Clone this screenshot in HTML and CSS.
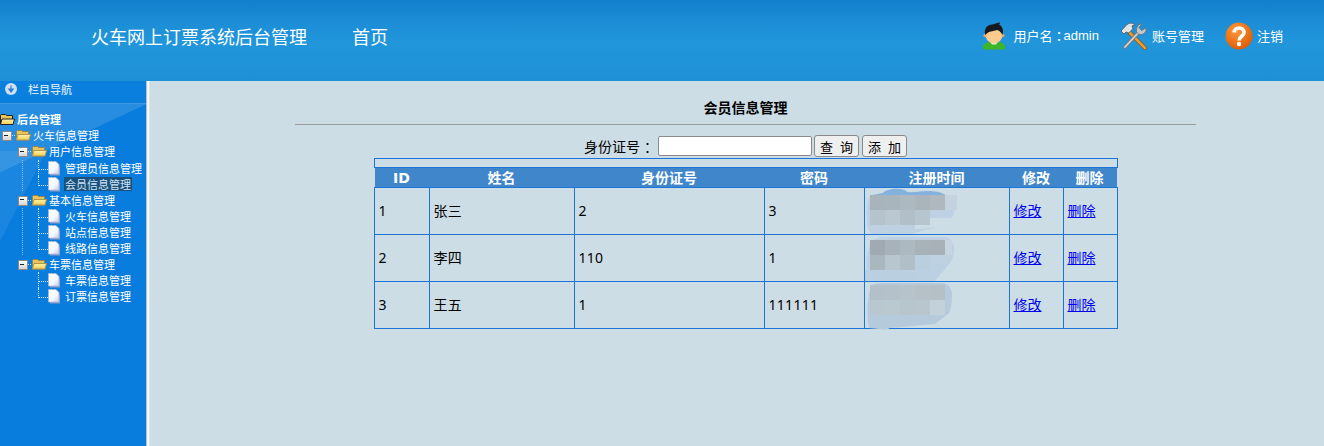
FILE: index.html
```html
<!DOCTYPE html>
<html lang="zh-CN">
<head>
<meta charset="utf-8">
<title>火车网上订票系统后台管理</title>
<link rel="stylesheet" href="styles.css">
</head>
<body>
<svg class="defs" width="0" height="0">
  <defs>
    <linearGradient id="fy" x1="0" y1="0" x2="0" y2="1"><stop offset="0" stop-color="#fff5a8"/><stop offset="1" stop-color="#f2cc55"/></linearGradient>
    <linearGradient id="pg" x1="0" y1="0" x2="1" y2="1"><stop offset="0" stop-color="#fff"/><stop offset=".6" stop-color="#f4f7fd"/><stop offset="1" stop-color="#c3d0ee"/></linearGradient>
    <symbol id="folder" viewBox="0 0 16 16"><path d="M.5 13V4.500l1-1h4l1 1h6v8.500z" fill="#e8c55a" stroke="#9a8548"/><path d="M.5 13l1.500-5.500h12.500L13 13z" fill="url(#fy)" stroke="#b0964c"/></symbol>
    <symbol id="rootfolder" viewBox="0 0 16 16"><path d="M.5 13V4.500l1-1h4l1 1h6v8.500z" fill="#e8c55a" stroke="#222"/><path d="M.5 13.500l1.500-5.500h12.500L13 13.500z" fill="url(#fy)" stroke="#222"/></symbol>
    <symbol id="page" viewBox="0 0 16 16"><path d="M2 3.500h7l3 3v9H2z" fill="#8b9cc3"/><path d="M.5 1.500h7.500l3 3V14H.5z" fill="url(#pg)" stroke="#aab8d6" stroke-width=".8"/></symbol>
  </defs>
</svg>
<header class="top">
  <div class="brand">火车网上订票系统后台管理</div>
  <a class="home">首页</a>
  <nav class="user">
    <span class="uitem u1">
      <svg class="ic" width="28" height="28" viewBox="0 0 28 28"><path d="M3 27.500v-4c2-3 6-4 11-4s9 1 11 4v4z" fill="#3cb529"/><path d="M10 19.500h8l-2 3h-4z" fill="#e6f6dc"/><ellipse cx="14" cy="13" rx="8.500" ry="8.500" fill="#fdcb8d"/><circle cx="5" cy="13.500" r="1.600" fill="#f0aa66"/><circle cx="23" cy="13.500" r="1.600" fill="#f0aa66"/><path d="M5.500 13C3 7 8 2 13 2.500 15 1 18 1 20 .5c0 1-.5 1.500-1 2 3 1.500 5 5 3.500 10.500C21 10 19 8.500 17 8 13 9.500 8 9 5.500 13z" fill="#17191e"/></svg>
      用户名<span class="colon">：</span><span class="latin">admin</span>
    </span>
    <span class="uitem u2">
      <svg class="ic" width="28" height="28" viewBox="0 0 28 28"><path d="M10 11l15 15" stroke="#7a5a2a" stroke-width="4" stroke-linecap="round"/><path d="M10 11l15 15" stroke="#f09a28" stroke-width="2.600" stroke-linecap="round"/><path d="M19 10L5 25" stroke="#77797b" stroke-width="3.600" stroke-linecap="round"/><path d="M19 10L5 25" stroke="#d6d7d8" stroke-width="1.800" stroke-linecap="round"/><path d="M22 1.500l-3 4 2.500 3 4.500-2.500c.8 3.500-2 7-6 6.500-2.500-.5-4-2.500-3.500-5.500C17 4 19 2 22 1.500z" fill="#c4c6c8" stroke="#6a6c6e" stroke-width=".8"/><path d="M1 9l6-6.500C10 .5 13 1 15 3l-3 .8.800 3-4 4.200-2.800-1L4 12z" fill="#e4e4e4" stroke="#55585b" stroke-width=".8"/></svg>
      账号管理
    </span>
    <span class="uitem u3">
      <svg class="ic" width="28" height="28" viewBox="0 0 28 28"><defs><radialGradient id="og" cx=".4" cy=".3" r=".8"><stop offset="0" stop-color="#ff9a3a"/><stop offset="1" stop-color="#d95400"/></radialGradient></defs><circle cx="14" cy="14" r="13.500" fill="url(#og)"/><path d="M9 10.500c.5-6 10-6 10 0 0 4-5 3.500-5 8" fill="none" stroke="#fff" stroke-width="3.600"/><circle cx="14" cy="22" r="2.200" fill="#fff"/></svg>
      注销
    </span>
  </nav>
</header>
<div class="layout">
  <aside class="side">
    <div class="side-head">
      <svg class="nav-ic" width="14" height="14" viewBox="0 0 14 14"><circle cx="7" cy="7" r="6" fill="#cfe0f2"/><path d="M7 3.500v5M4.800 7L7 10l2.200-3z" fill="#2a7fd0" stroke="#2a7fd0" stroke-width="1.200"/></svg>
      <span>栏目导航</span>
    </div>
    <ul class="tree">
      <li class="row root"><i><svg width="16" height="16"><use href="#rootfolder"/></svg></i><span class="tx strong">后台管理</span></li>
      <li class="row"><i class="exp"></i><i><svg width="16" height="16"><use href="#folder"/></svg></i><span class="tx">火车信息管理</span></li>
      <li class="row"><i class="sp"></i><i class="exp"></i><i><svg width="16" height="16"><use href="#folder"/></svg></i><span class="tx">用户信息管理</span></li>
      <li class="row"><i class="sp"></i><i class="sp vl"></i><i class="jn t"></i><i><svg width="16" height="16"><use href="#page"/></svg></i><span class="tx">管理员信息管理</span></li>
      <li class="row"><i class="sp"></i><i class="sp vl"></i><i class="jn"></i><i><svg width="16" height="16"><use href="#page"/></svg></i><span class="tx sel">会员信息管理</span></li>
      <li class="row"><i class="sp"></i><i class="exp vl"></i><i><svg width="16" height="16"><use href="#folder"/></svg></i><span class="tx">基本信息管理</span></li>
      <li class="row"><i class="sp"></i><i class="sp vl"></i><i class="jn t"></i><i><svg width="16" height="16"><use href="#page"/></svg></i><span class="tx">火车信息管理</span></li>
      <li class="row"><i class="sp"></i><i class="sp vl"></i><i class="jn t"></i><i><svg width="16" height="16"><use href="#page"/></svg></i><span class="tx">站点信息管理</span></li>
      <li class="row"><i class="sp"></i><i class="sp vl"></i><i class="jn"></i><i><svg width="16" height="16"><use href="#page"/></svg></i><span class="tx">线路信息管理</span></li>
      <li class="row"><i class="sp"></i><i class="exp vl"></i><i><svg width="16" height="16"><use href="#folder"/></svg></i><span class="tx">车票信息管理</span></li>
      <li class="row"><i class="sp"></i><i class="sp"></i><i class="jn t"></i><i><svg width="16" height="16"><use href="#page"/></svg></i><span class="tx">车票信息管理</span></li>
      <li class="row"><i class="sp"></i><i class="sp"></i><i class="jn"></i><i><svg width="16" height="16"><use href="#page"/></svg></i><span class="tx">订票信息管理</span></li>
    </ul>
  </aside>
  <div class="splitter"></div>
  <main class="main">
    <h1 class="title">会员信息管理</h1>
    <hr class="rule">
    <form class="search">
      <label class="lab">身份证号<span class="colon">：</span></label>
      <input class="inp" type="text">
      <button class="btn" type="button">查 询</button>
      <button class="btn" type="button">添 加</button>
    </form>
    <table class="grid">
      <colgroup><col class="c1"><col class="c2"><col class="c3"><col class="c4"><col class="c5"><col class="c6"><col class="c7"></colgroup>
      <tr class="blank"><td colspan="7"></td></tr>
      <tr class="hd"><th>ID</th><th>姓名</th><th>身份证号</th><th>密码</th><th>注册时间</th><th>修改</th><th>删除</th></tr>
      <tr><td>1</td><td>张三</td><td>2</td><td>3</td><td class="blur">
        <svg class="mask" width="100" height="52" viewBox="0 0 100 52"><path d="M3 12c2-6 8-5 14-6 3-5 18-7 24-3 4 3 10-1 24 0 12 0 18 3 22 12 3 7 3 14-2 15H50v11c8 0 14-1 22-2L46 46H6C1 40 1 25 3 12z" fill="#bed1e2"/><path d="M5 8c4-2 10-2 13-3 3-4 17-6 23-2 4 3 11 0 24 0 12 1 16 4 20 7H5z" fill="#85b2dc"/><g><rect x="5" y="7" width="15" height="15" fill="#a8b3bb"/><rect x="20" y="7" width="15" height="15" fill="#a9b5bc"/><rect x="35" y="7" width="15" height="15" fill="#adb9c0"/><rect x="50" y="7" width="15" height="15" fill="#aab5bb"/><rect x="65" y="7" width="15" height="15" fill="#aeb8bd"/><rect x="80" y="7" width="12" height="15" fill="#c4d3dd"/><rect x="5" y="22" width="15" height="15" fill="#b4c3cc"/><rect x="20" y="22" width="15" height="15" fill="#bac9d1"/><rect x="35" y="22" width="15" height="15" fill="#b0bfc8"/><rect x="50" y="22" width="15" height="15" fill="#b7c6ce"/></g></svg></td><td><a>修改</a></td><td><a>删除</a></td></tr>
      <tr><td>2</td><td>李四</td><td>110</td><td>1</td><td class="blur">
        <svg class="mask" width="100" height="52" viewBox="0 0 100 52"><path d="M6 8c1-4 8-6 14-6h60c7 1 9 8 9 12 0 8-2 10-4 14H50v18H4C0 30 1 18 6 8z" fill="#bed1e2"/><g><rect x="5" y="5" width="15" height="15" fill="#a0aab2"/><rect x="20" y="5" width="15" height="15" fill="#a7b2ba"/><rect x="35" y="5" width="15" height="15" fill="#adb9c0"/><rect x="50" y="5" width="15" height="15" fill="#a7b2b9"/><rect x="65" y="5" width="15" height="15" fill="#a8b1b7"/><rect x="80" y="5" width="7" height="15" fill="#c6d5df"/><rect x="5" y="20" width="15" height="15" fill="#a9b7bf"/><rect x="20" y="20" width="15" height="15" fill="#b8c7cf"/><rect x="35" y="20" width="15" height="15" fill="#b0bfc8"/><rect x="50" y="20" width="15" height="15" fill="#b7c6ce"/></g><path d="M0 35h50v-15h15v8h20l-15 18H0z" fill="#b9cfe0" opacity=".9"/></svg></td><td><a>修改</a></td><td><a>删除</a></td></tr>
      <tr><td>3</td><td>王五</td><td>1</td><td>111111</td><td class="blur">
        <svg class="mask" width="100" height="52" viewBox="0 0 100 52"><path d="M6 4C8 1 14 1 20 1h58c6 1 9 6 9 12 0 8-1 14-3 18l-14 11-45 4c-3 2-8 2-11 1L4 46C1 30 3 14 6 4z" fill="#b5cadb"/><g><rect x="5" y="3" width="15" height="15" fill="#b3c0c9"/><rect x="20" y="3" width="15" height="15" fill="#b4c1ca"/><rect x="35" y="3" width="15" height="15" fill="#b7c3ca"/><rect x="50" y="3" width="15" height="15" fill="#b5c0c7"/><rect x="65" y="3" width="15" height="15" fill="#b5c0c6"/><rect x="5" y="18" width="15" height="15" fill="#b9c7d0"/><rect x="20" y="18" width="15" height="15" fill="#bac8d0"/><rect x="35" y="18" width="15" height="15" fill="#b7c5cd"/><rect x="50" y="18" width="15" height="15" fill="#b9c6cd"/><rect x="65" y="18" width="15" height="15" fill="#c3d1da"/></g></svg></td><td><a>修改</a></td><td><a>删除</a></td></tr>
    </table>
  </main>
</div>
</body>
</html>
```
FILE: styles.css
```css
* { box-sizing: border-box; }
html, body { margin: 0; height: 100%; overflow: hidden; }
body {
  font-family: "Noto Sans CJK SC", sans-serif;
  background: #cddde6;
  color: #000;
}
.defs { display: block; height: 0; overflow: hidden; }
.top {
  height: 81px;
  display: flex;
  align-items: center;
  padding: 0 41px 10px 91px;
  color: #fff;
  background: linear-gradient(#1280cd 0, #1c8dd6 22px, #2196db 42px, #1e90d6 81px);
}
.brand, .home {
  font-size: 18px;
  line-height: 24px;
}
.home { margin-left: 45px; }
.user {
  margin-left: auto;
  display: flex;
  align-items: center;
  font-size: 13px;
}
.colon { font-family: "Noto Sans CJK TC", sans-serif; }
.user .colon { margin-right: -2px; }
.lab .colon { margin-left: 4px; margin-right: -4px; }
.latin { font-family: "Liberation Sans", sans-serif; }
.uitem { display: flex; align-items: center; white-space: nowrap; }
.ic { flex: none; margin-right: 4px; }
.u1 .ic { margin-right: 6px; }
.u2 { margin-left: 21px; }
.u3 { margin-left: 21px; }
.layout { display: flex; height: 365px; }
.side {
  width: 146px;
  flex: none;
  color: #fff;
  font-size: 11px;
  background:
    linear-gradient(to bottom right, rgba(255,255,255,.12) 50%, rgba(255,255,255,0) 50.5%) 0 23px / 146px 68px no-repeat,
    linear-gradient(to bottom right, rgba(255,255,255,.07) 50%, rgba(255,255,255,0) 50.5%) 0 70px / 46px 90px no-repeat,
    #097ddd;
}
.side-head {
  height: 23px;
  display: flex;
  align-items: center;
  padding: 0 0 6px 4px;
  color: #d3e6f8;
  font-weight: 500;
  background: #0a7fdd;
  border-bottom: 1px solid #3b97e2;
}
.nav-ic { margin-right: 10px; }
.tree { list-style: none; margin: 7.2px 0 0; padding: 0; }
.row {
  height: 16.1px;
  display: flex;
  align-items: center;
  line-height: 14px;
  white-space: nowrap;
}
.row i { flex: none; display: block; width: 16px; height: 16px; position: relative; }
.row i svg { display: block; }
.root i { margin-right: 1px; }
.tx { padding: 0 1px; }
.strong { font-weight: 700; padding-left: 0; }
.sel { background: #1a5079; color: #cfe3f7; }
.row i.exp::before {
  content: "";
  position: absolute;
  left: 2px; top: 4px;
  width: 8px; height: 8px;
  background: linear-gradient(#fff, #d5d5d5);
  border: 1px solid #8a8a8a;
  z-index: 1;
}
.row i.exp::after {
  content: "";
  position: absolute;
  left: 4px; top: 7.5px;
  width: 4px; height: 1px;
  background: #222;
  z-index: 2;
}
.row i.exp { background: repeating-linear-gradient(90deg, #bcdcf5 0 1px, transparent 1px 2px) 10px 8px / 6px 1px no-repeat; }
.row i.vl:not(.exp) { background: repeating-linear-gradient(#8fc4ef 0 1px, transparent 1px 2px) 6px 0 / 1px 100% no-repeat; }
.row i.jn::before {
  content: "";
  position: absolute;
  left: 6px; top: 0;
  width: 9px; height: 9px;
  border-left: 1px dotted #cfe6fa;
  border-bottom: 1px dotted #cfe6fa;
}
.row i.jn.t::after {
  content: "";
  position: absolute;
  left: 6px; top: 9px;
  height: 7px;
  border-left: 1px dotted #cfe6fa;
}
.splitter {
  width: 4px;
  flex: none;
  background: linear-gradient(90deg, #b9c2c9 0 1px, #f2f6f8 1px 3px, #dfe8ee 3px);
}
.main {
  flex: 1;
  min-width: 0;
  display: flex;
  flex-direction: column;
  align-items: center;
  padding-left: 17px;
}
.title {
  margin: 16px 0 0;
  height: 27px;
  font-size: 14px;
  line-height: 21px;
  font-weight: 700;
}
.rule {
  width: 901px;
  height: 1px;
  margin: 0;
  border: 0;
  background: #9b9b9b;
}
.search {
  margin-top: 10px;
  height: 22px;
  display: flex;
  align-items: center;
  font-size: 14px;
}
.lab { margin-right: 4px; white-space: nowrap; }
.inp {
  width: 154px;
  height: 20px;
  padding: 0;
  background: #fff;
  border: 1px solid #8a8a8a;
  border-radius: 2px;
}
.btn {
  height: 22px;
  width: 45px;
  margin-left: 3px;
  padding: 0;
  font: 13px "Noto Sans CJK SC", sans-serif;
  word-spacing: 4px;
  background: #efefef;
  border: 1px solid #8a8a8a;
  border-radius: 3px;
  color: #000;
}
.inp + .btn { margin-left: 2px; }
.grid {
  width: 742px;
  table-layout: fixed;
  border-collapse: collapse;
  font-size: 14px;
  margin: 1px 0 0 1px;
}
.c1 { width: 55px; } .c2 { width: 145px; } .c3 { width: 190px; }
.c4 { width: 100px; } .c5 { width: 145px; } .c6 { width: 54px; } .c7 { width: 53px; }
.grid td {
  border: 1px solid #1b74d6;
  height: 47px;
  padding: 0 4px 1px 3px;
  line-height: 20px;
  letter-spacing: .3px;
  font-family: "Noto Sans", "Noto Sans CJK SC", sans-serif;
}
.blank td { height: 9px; padding: 0; }
.hd th {
  height: 20px;
  padding: 0 2px 0 0;
  color: #fff;
  font-size: 14px;
  line-height: 18px;
  font-weight: 700;
  background: #3f86cb;
  border-top: 1px solid #1b74d6;
  border-bottom: 1px solid #1b74d6;
  font-family: "DejaVu Sans", "Noto Sans CJK SC", sans-serif;
}
.grid a { color: #00e; text-decoration: underline; cursor: pointer; letter-spacing: 0; }
.blur { position: relative; }
.mask { position: absolute; left: 0; top: 0; }
```
